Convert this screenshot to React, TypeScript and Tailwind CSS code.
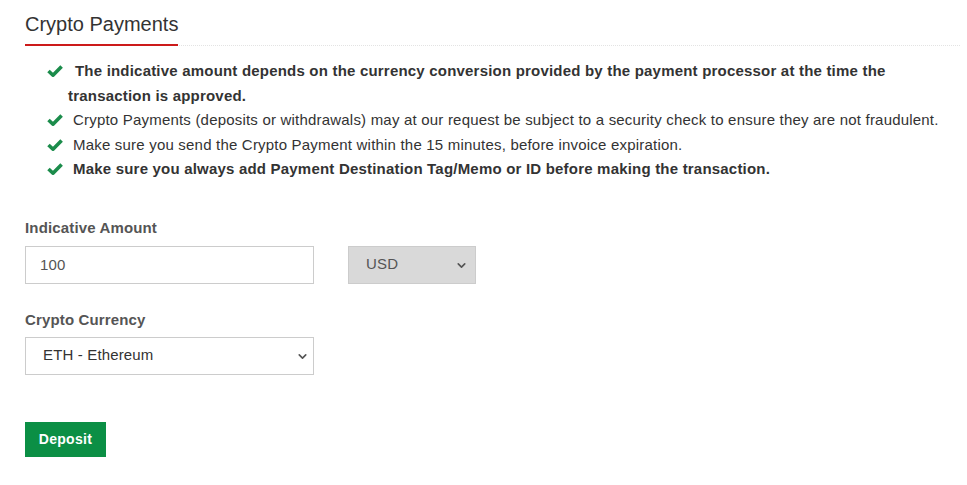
import { ChevronDown } from 'lucide-react';

const notes = [
  {
    text: 'The indicative amount depends on the currency conversion provided by the payment processor at the time the transaction is approved.',
    bold: true,
    lead: true,
  },
  {
    text: 'Crypto Payments (deposits or withdrawals) may at our request be subject to a security check to ensure they are not fraudulent.',
    bold: false,
  },
  {
    text: 'Make sure you send the Crypto Payment within the 15 minutes, before invoice expiration.',
    bold: false,
  },
  {
    text: 'Make sure you always add Payment Destination Tag/Memo or ID before making the transaction.',
    bold: true,
  },
];

const CheckIcon = () => (
  <svg viewBox="0 0 16 12" className="inline-block w-[16px] h-[12px] mr-[10px] align-[-1px]">
    <path d="M1.5 6 L6 10.2 L14.6 1.6" fill="none" stroke="#1b8c4b" strokeWidth="3.6" strokeLinejoin="round" />
  </svg>
);

const App = () => {
  return (
    <div className="min-h-screen bg-white pl-[25px] pr-[7px] pt-[12px] font-['Liberation_Sans',Arial,sans-serif] text-[#333]">
      <div className="flex border-b border-dotted border-[#e3e3e3]">
        <h2 className="text-[20px] leading-[24px] text-[#333] pb-[8px] border-b-2 border-[#cc1a1a] -mb-px">
          Crypto Payments
        </h2>
      </div>

      <ul className="mt-[13px] ml-[22px] text-[15px] leading-[24.5px] tracking-[0.2px]">
        {notes.map((n, i) => (
          <li key={i} className="pl-[21px] -indent-[21px]">
            <CheckIcon />
            <span className={n.bold ? 'font-bold' : ''}>
              {n.lead ? <span className="ml-[2px]" /> : null}
              {n.text}
            </span>
          </li>
        ))}
      </ul>

      <form className="mt-[36px] text-[15px] tracking-[0.15px]" onSubmit={(e) => e.preventDefault()}>
        <label className="block font-bold text-[#555] leading-[20px]">Indicative Amount</label>
        <div className="flex gap-[34px] mt-[8px]">
          <input
            defaultValue="100"
            className="w-[289px] h-[38px] border border-[#ccc] px-[14px] text-[#555] outline-none"
          />
          <div className="relative">
            <select
              defaultValue="USD"
              className="appearance-none w-[128px] h-[38px] border border-[#ccc] bg-[#d9d9d9] pl-[17px] text-[#555] outline-none"
            >
              <option>USD</option>
              <option>EUR</option>
            </select>
            <ChevronDown size={13} strokeWidth={3} className="absolute right-[8px] top-[13px] text-[#555] pointer-events-none" />
          </div>
        </div>

        <label className="block font-bold text-[#555] leading-[20px] mt-[26px]">Crypto Currency</label>
        <div className="relative w-[289px] mt-[7px]">
          <select
            defaultValue="ETH"
            className="appearance-none w-full h-[38px] border border-[#ccc] bg-white pl-[17px] text-[#333] outline-none"
          >
            <option value="BTC">BTC - Bitcoin</option>
            <option value="ETH">ETH - Ethereum</option>
            <option value="USDT">USDT - Tether</option>
          </select>
          <ChevronDown size={13} strokeWidth={3} className="absolute right-[5px] top-[13px] text-[#555] pointer-events-none" />
        </div>

        <button
          type="submit"
          className="mt-[47px] w-[81px] h-[35px] bg-[#0b8f45] text-white font-bold text-[14px] tracking-[0.3px]"
        >
          Deposit
        </button>
      </form>
    </div>
  );
};

export default App;
